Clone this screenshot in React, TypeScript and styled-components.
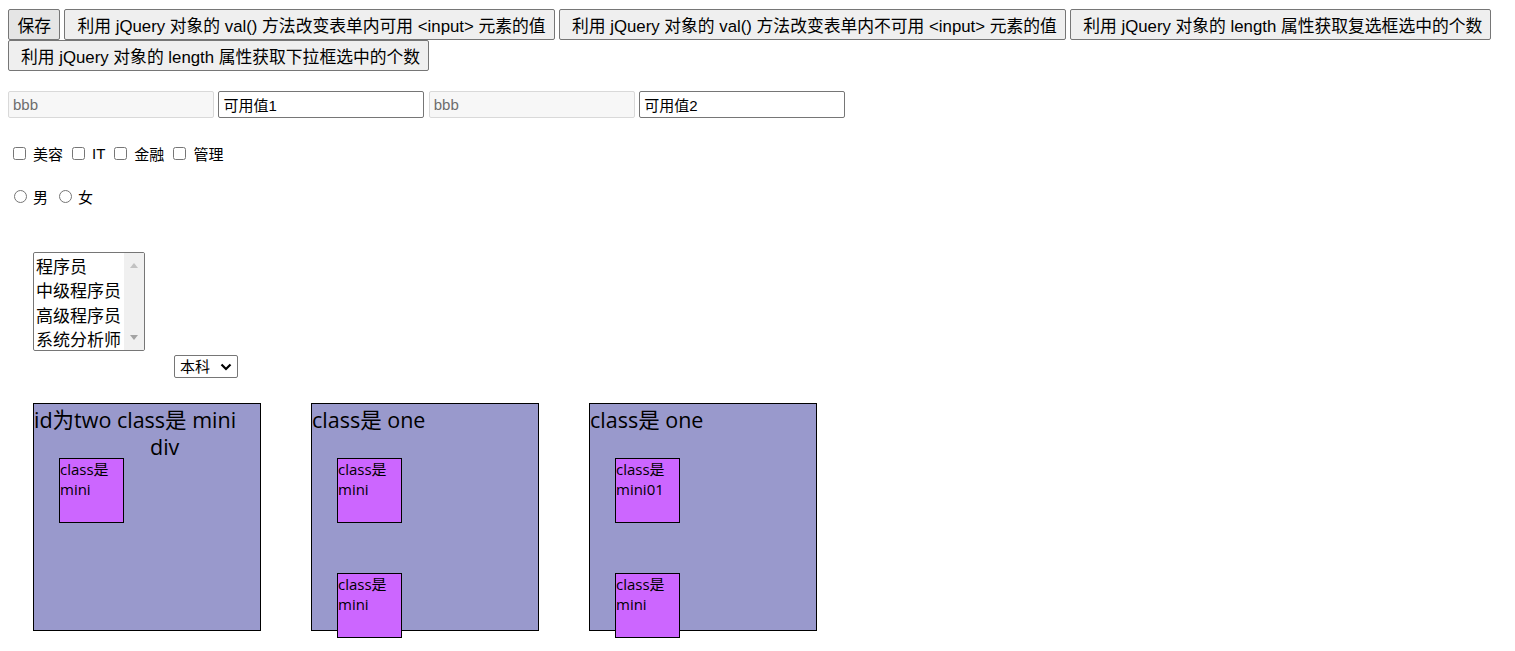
import styled, { createGlobalStyle } from "styled-components";

const GlobalStyle = createGlobalStyle`
  body {
    margin: 8px;
    font-family: "Liberation Sans", "Noto Sans CJK SC", sans-serif;
    font-size: 16px;
    color: #000;
    background: #fff;
  }
`;

const ButtonBar = styled.div`
  display: flex;
  flex-wrap: wrap;
  column-gap: 4.4px;
  row-gap: 0;
  padding-top: 1px;
`;

const ActionButton = styled.button<{ $pressed?: boolean; $lead?: boolean }>`
  height: 31px;
  padding: 0 8px 0 ${({ $lead }) => ($lead ? "12px" : "8.5px")};
  font-family: "Liberation Sans", "Noto Sans CJK SC", sans-serif;
  font-size: 16.8px;
  color: #000;
  background: ${({ $pressed }) => ($pressed ? "#e5e5e5" : "#efefef")};
  border: 1px solid #767676;
  border-radius: 2px;
  white-space: nowrap;
`;

const InputRow = styled.div`
  display: flex;
  gap: 4.4px;
  margin-top: 20px;
`;

const TextInput = styled.input`
  box-sizing: border-box;
  width: 206px;
  height: 27px;
  padding: 2px 4px;
  font-family: "Liberation Sans", "Noto Sans CJK SC", sans-serif;
  font-size: 15px;
  color: #000;
  background: #fff;
  border: 1px solid #767676;
  border-radius: 2px;

  &:disabled {
    color: #6d6d6d;
    background: #f7f7f7;
    border-color: #d9d9d9;
  }
`;

const ChoiceRow = styled.div<{ $top: number; $gap: number }>`
  display: flex;
  align-items: center;
  gap: ${({ $gap }) => $gap}px;
  height: 20px;
  margin-top: ${({ $top }) => $top}px;
  font-family: "Liberation Sans", "Noto Sans CJK SC", sans-serif;
  font-size: 15px;
`;

const Choice = styled.label<{ $radio?: boolean }>`
  display: inline-flex;
  align-items: center;

  input {
    width: 13px;
    height: 13px;
    margin: 0 ${({ $radio }) => ($radio ? "6px 0 6px" : "7px 0 5px")};
  }
`;

const SelectRow = styled.div`
  display: flex;
  align-items: flex-start;
  gap: 29px;
  margin-top: 46px;
  padding-left: 25px;
`;

const ListFrame = styled.div`
  box-sizing: border-box;
  display: flex;
  width: 112px;
  height: 99px;
  border: 1px solid #767676;
  border-radius: 2px;
  overflow: hidden;
`;

const ListSelect = styled.select`
  flex: 1;
  min-width: 0;
  height: 97px;
  margin: 0;
  padding: 0 0 0 2px;
  font-family: "Liberation Sans", "Noto Sans CJK SC", sans-serif;
  font-size: 17px;
  color: #000;
  border: none;
  outline: none;
  overflow: hidden;

  option {
    padding: 0;
    height: 24.25px;
    line-height: 24.25px;
  }
`;

const ScrollTrack = styled.div`
  display: flex;
  flex-direction: column;
  align-items: center;
  justify-content: space-between;
  width: 20px;
  padding: 10px 0 10px;
  background: #f0f0f0;
`;

const DropFrame = styled.div`
  position: relative;
  display: inline-flex;
  margin-top: 103px;
`;

const DropSelect = styled.select`
  box-sizing: border-box;
  width: 64px;
  height: 23px;
  padding: 0 20px 0 5px;
  font-family: "Liberation Sans", "Noto Sans CJK SC", sans-serif;
  font-size: 15px;
  color: #000;
  background: #fff;
  border: 1px solid #767676;
  border-radius: 2px;
  appearance: none;
`;

const DropArrow = styled.svg`
  position: absolute;
  right: 6px;
  top: 8px;
  pointer-events: none;
`;

const BoxRow = styled.div`
  display: flex;
  align-items: flex-start;
  gap: 50px;
  margin-top: 25px;
  padding-left: 25px;
  padding-bottom: 10px;
`;

const Box = styled.div`
  width: 226px;
  height: 226px;
  flex: none;
  overflow: visible;
  background: #9999cc;
  border: 1px solid #000;
  font-family: "Open Sans", "Noto Sans CJK SC", sans-serif;
  font-size: 21.5px;
`;

const BoxTitle = styled.div`
  height: 52px;
  padding-top: 2px;
  line-height: 27px;
`;

const TitleTail = styled.span`
  display: inline-block;
  margin-left: 116px;
`;

const MiniStack = styled.div`
  display: grid;
  grid-auto-rows: 65px;
  row-gap: 50px;
  justify-items: start;
  padding-left: 25px;
`;

const Mini = styled.div`
  position: relative;
  z-index: 1;
  width: 63px;
  height: 63px;
  background: #cc66ff;
  border: 1px solid #000;
  font-family: "Open Sans", "Noto Sans CJK SC", sans-serif;
  font-size: 15px;
  line-height: 20px;
`;

const jobs = ["程序员", "中级程序员", "高级程序员", "系统分析师"];
const degrees = ["本科", "硕士", "博士"];

function TrackArrow({ up, color }: { up?: boolean; color: string }) {
  return (
    <svg width="8" height="5" viewBox="0 0 8 5">
      <polygon points={up ? "0,5 4,0 8,5" : "0,0 4,5 8,0"} fill={color} />
    </svg>
  );
}

export default function App() {
  return (
    <>
      <GlobalStyle />
      <ButtonBar>
        <ActionButton $pressed>保存</ActionButton>
        <ActionButton $lead>利用 jQuery 对象的 val() 方法改变表单内可用 &lt;input&gt; 元素的值</ActionButton>
        <ActionButton $lead>利用 jQuery 对象的 val() 方法改变表单内不可用 &lt;input&gt; 元素的值</ActionButton>
        <ActionButton $lead>利用 jQuery 对象的 length 属性获取复选框选中的个数</ActionButton>
        <ActionButton $lead>利用 jQuery 对象的 length 属性获取下拉框选中的个数</ActionButton>
      </ButtonBar>

      <InputRow>
        <TextInput disabled defaultValue="bbb" />
        <TextInput defaultValue="可用值1" />
        <TextInput disabled defaultValue="bbb" />
        <TextInput defaultValue="可用值2" />
      </InputRow>

      <ChoiceRow $top={25} $gap={4}>
        {["美容", "IT", "金融", "管理"].map((item) => (
          <Choice key={item}>
            <input type="checkbox" name="hobby" />
            {item}
          </Choice>
        ))}
      </ChoiceRow>

      <ChoiceRow $top={23} $gap={5}>
        {["男", "女"].map((item) => (
          <Choice key={item} $radio>
            <input type="radio" name="sex" />
            {item}
          </Choice>
        ))}
      </ChoiceRow>

      <SelectRow>
        <ListFrame>
          <ListSelect multiple size={4} defaultValue={[]}>
            {jobs.map((job) => (
              <option key={job} value={job}>
                {job}
              </option>
            ))}
          </ListSelect>
          <ScrollTrack>
            <TrackArrow up color="#c2c2c2" />
            <TrackArrow color="#a3a3a3" />
          </ScrollTrack>
        </ListFrame>
        <DropFrame>
          <DropSelect defaultValue="本科">
            {degrees.map((degree) => (
              <option key={degree} value={degree}>
                {degree}
              </option>
            ))}
          </DropSelect>
          <DropArrow width="12" height="8" viewBox="0 0 12 8">
            <polyline points="1.5,1.5 6,6 10.5,1.5" fill="none" stroke="#000" strokeWidth="2.2" />
          </DropArrow>
        </DropFrame>
      </SelectRow>

      <BoxRow>
        <Box>
          <BoxTitle>
            id为two class是 mini <TitleTail>div</TitleTail>
          </BoxTitle>
          <MiniStack>
            <Mini>class是 mini</Mini>
          </MiniStack>
        </Box>
        <Box>
          <BoxTitle>class是 one</BoxTitle>
          <MiniStack>
            <Mini>class是 mini</Mini>
            <Mini>class是 mini</Mini>
          </MiniStack>
        </Box>
        <Box>
          <BoxTitle>class是 one</BoxTitle>
          <MiniStack>
            <Mini>class是 mini01</Mini>
            <Mini>class是 mini</Mini>
          </MiniStack>
        </Box>
      </BoxRow>
    </>
  );
}
